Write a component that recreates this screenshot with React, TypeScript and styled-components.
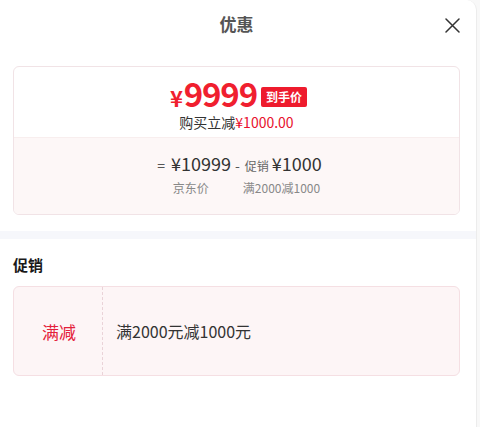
import React from "react";
import styled, { createGlobalStyle } from "styled-components";

const Global = createGlobalStyle`
  html, body { margin: 0; padding: 0; background: #f8f8f8; }
  body { font-family: "Noto Sans CJK SC", "Noto Sans", sans-serif; }
`;

const Panel = styled.div`
  width: 477px;
  height: 427px;
  background: #fff;
  border-top-right-radius: 10px;
  border-right: 1px solid #ececec;
  box-sizing: border-box;
  display: flex;
  flex-direction: column;
`;

const Header = styled.div`
  height: 46px;
  display: grid;
  grid-template-columns: 1fr auto 1fr;
  align-items: center;
  padding: 0 16px 0 13px;
`;

const Title = styled.div`
  grid-column: 2;
  font-size: 17px;
  font-weight: 700;
  color: #555;
  line-height: 1;
`;

const Close = styled.button`
  grid-column: 3;
  justify-self: end;
  width: 18px;
  height: 18px;
  padding: 0;
  border: none;
  background: none;
  display: flex;
  align-items: center;
  justify-content: center;
  margin-top: 4px;
  margin-right: -1px;
`;

const Section = styled.div`
  padding: 20px 16px 0 13px;
`;

const PriceCard = styled.div`
  border: 1px solid #f1e3e6;
  border-radius: 6px;
  overflow: hidden;
`;

const PriceTop = styled.div`
  height: 70px;
  display: flex;
  flex-direction: column;
  align-items: center;
  justify-content: center;
  padding-top: 6px;
  box-sizing: border-box;
`;

const BigRow = styled.div`
  display: flex;
  align-items: center;
  gap: 4px;
  height: 34px;
`;

const BigPrice = styled.span`
  color: #f01f2f;
  font-size: 33px;
  font-weight: 700;
  line-height: 34px;
  letter-spacing: -1.2px;
  margin-left: 4px;
`;

const Yen = styled.span`
  font-size: 22px;
  margin-right: 2px;
`;

const Badge = styled.span`
  background: #ee1b2d;
  color: #fff;
  font-size: 12px;
  font-weight: 700;
  line-height: 20px;
  padding: 0 5px;
  border-radius: 2px;
  margin-top: 3px;
`;

const Saving = styled.div`
  font-size: 14px;
  color: #333;
  line-height: 20px;
`;

const Red = styled.span`
  color: #e8112d;
`;

const PriceBottom = styled.div`
  background: #fdf7f7;
  border-top: 1px solid #f8eeee;
  height: 77px;
  display: flex;
  flex-direction: column;
  align-items: center;
  justify-content: center;
  padding-bottom: 4px;
  box-sizing: border-box;
`;

const Formula = styled.div`
  display: flex;
  align-items: baseline;
  color: #333;
  margin-left: 6px;
  line-height: 24px;
`;

const Op = styled.span`
  font-size: 14px;
  color: #555;
  margin: 0 6px 0 0;
`;

const Minus = styled(Op)`
  margin: 0 5px 0 4px;
`;

const Amount = styled.span`
  font-size: 18px;
  font-weight: 400;
  color: #333;
`;

const Tag = styled.span`
  font-size: 12px;
  color: #666;
  margin-right: 3px;
`;

const Labels = styled.div`
  display: flex;
  font-size: 12px;
  color: #888;
  line-height: 18px;
  margin-top: 1px;
  margin-left: 20px;
`;

const Label = styled.span<{ $w?: number }>`
  width: ${(p) => (p.$w ? `${p.$w}px` : "auto")};
`;

const Band = styled.div`
  height: 8px;
  background: #f6f7fb;
  margin-top: 16px;
`;

const PromoSection = styled.div`
  padding: 16px 16px 0 13px;
`;

const Heading = styled.div`
  font-size: 15px;
  font-weight: 700;
  color: #1a1a1a;
  line-height: 20px;
`;

const PromoCard = styled.div`
  margin-top: 11px;
  height: 90px;
  box-sizing: border-box;
  background: #fdf5f6;
  border: 1px solid #f5dfe3;
  border-radius: 6px;
  display: flex;
  align-items: stretch;
`;

const PromoType = styled.div`
  width: 89px;
  border-right: 1px dashed #ead3d8;
  display: flex;
  align-items: center;
  justify-content: center;
  color: #e4203a;
  font-size: 17px;
  padding-left: 2px;
  box-sizing: border-box;
`;

const PromoText = styled.div`
  display: flex;
  align-items: center;
  padding-left: 13px;
  font-size: 16px;
  color: #333;
`;

export default function App() {
  return (
    <>
      <Global />
      <Panel>
        <Header>
          <Title>优惠</Title>
          <Close aria-label="close">
            <svg width="15" height="15" viewBox="0 0 15 15">
              <path d="M1 1L14 14M14 1L1 14" stroke="#333" strokeWidth="1.5" strokeLinecap="round" />
            </svg>
          </Close>
        </Header>
        <Section>
          <PriceCard>
            <PriceTop>
              <BigRow>
                <BigPrice>
                  <Yen>¥</Yen>9999
                </BigPrice>
                <Badge>到手价</Badge>
              </BigRow>
              <Saving>
                购买立减<Red>¥1000.00</Red>
              </Saving>
            </PriceTop>
            <PriceBottom>
              <Formula>
                <Op>=</Op>
                <Amount>¥10999</Amount>
                <Minus>-</Minus>
                <Tag>促销</Tag>
                <Amount>¥1000</Amount>
              </Formula>
              <Labels>
                <Label $w={70}>京东价</Label>
                <Label>满2000减1000</Label>
              </Labels>
            </PriceBottom>
          </PriceCard>
        </Section>
        <Band />
        <PromoSection>
          <Heading>促销</Heading>
          <PromoCard>
            <PromoType>满减</PromoType>
            <PromoText>满2000元减1000元</PromoText>
          </PromoCard>
        </PromoSection>
      </Panel>
    </>
  );
}
